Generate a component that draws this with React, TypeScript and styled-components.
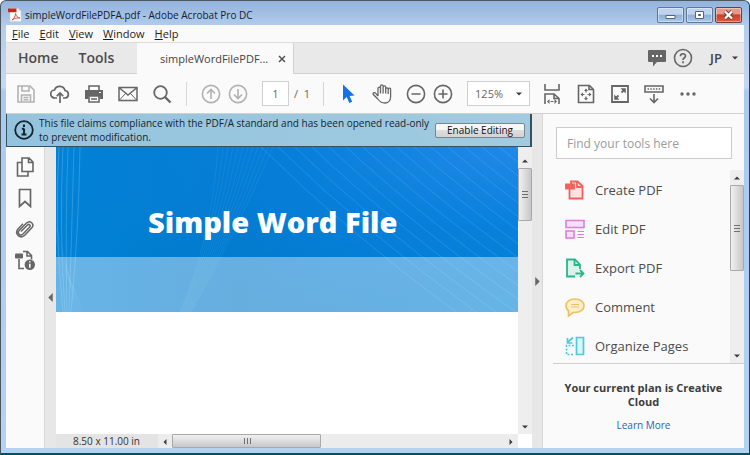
import React from "react";
import styled, { createGlobalStyle, css } from "styled-components";

const GlobalStyle = createGlobalStyle`
  *, *::before, *::after { box-sizing: border-box; }
  body { margin: 0; font-family: "Open Sans", "Noto Sans", sans-serif; color: #444; }
  button, input, select { font: inherit; color: inherit; margin: 0; }
  button { padding: 0; border: 0; background: none; }
`;

/* ---------- window frame ---------- */

const Frame = styled.div`
  display: flex;
  flex-direction: column;
  height: 100vh;
  padding: 0 5px 5px;
  border: solid;
  border-color: #4d5a66 #04505c #04505c #4a5560;
  border-width: 1px 1px 2px;
  border-radius: 6px 6px 0 0;
  background: linear-gradient(#93b3dc 0, #b3cdec 26px, #c3d9f3 86px, #a9c9ef 90px, #b3d3f3 100%);
  overflow: hidden;
`;

const TitleBar = styled.header`
  display: flex;
  align-items: center;
  gap: 3px;
  flex: none;
  height: 24px;
  padding: 4px 2px 0 2px;
`;

const WindowTitle = styled.h1`
  flex: 1;
  margin: 0;
  font-size: 10px;
  line-height: 16px;
  font-weight: 400;
  color: #14202e;
  white-space: nowrap;
`;

const WindowButton = styled.button<{ $danger?: boolean }>`
  display: grid;
  place-items: center;
  width: 27px;
  height: 16px;
  border: 1px solid #5f7896;
  border-radius: 2px;
  background: linear-gradient(#bdd3ee 0 45%, #8dafd6 50%, #a9c8ea);
  box-shadow: inset 0 0 0 1px rgba(255, 255, 255, 0.4);
  ${(p) =>
    p.$danger &&
    css`
      border-color: #7c3a35;
      background: linear-gradient(#e59a8c 0 40%, #c9402c 50%, #dd5a40);
    `}
`;

const WindowButtons = styled.div`
  display: flex;
  gap: 2px;
`;

const Client = styled.div`
  display: flex;
  flex-direction: column;
  flex: 1;
  min-height: 0;
  background: #fafafa;
`;

/* ---------- menu and tabs ---------- */

const MenuBar = styled.nav`
  display: flex;
  align-items: center;
  gap: 10px;
  flex: none;
  height: 18px;
  padding-left: 6px;
  border-bottom: 1px solid #dcdcdc;
`;

const MenuItem = styled.button`
  font-size: 11px;
  line-height: 16px;
  color: #1e1e1e;
`;

const TabBar = styled.div`
  display: flex;
  flex: none;
  height: 31px;
  background: #e9e9e9;
`;

const HomeTabs = styled.div`
  display: flex;
  align-items: center;
  gap: 20px;
  width: 131px;
  padding-left: 12px;
  border-bottom: 1px solid #d2d2d2;
`;

const HomeTab = styled.button`
  font-size: 14px;
  line-height: 20px;
  font-weight: 600;
  color: #4b4b4b;
`;

const DocumentTab = styled.div`
  display: flex;
  align-items: center;
  gap: 10px;
  padding: 0 7px 0 23px;
  font-size: 11px;
  line-height: 20px;
  background: #fafafa;
`;

const CloseTab = styled.button`
  display: grid;
  place-items: center;
  width: 8px;
  height: 12px;
`;

const AccountArea = styled.div`
  display: flex;
  align-items: center;
  justify-content: flex-end;
  gap: 4px;
  flex: 1;
  padding-right: 6px;
  border-bottom: 1px solid #d2d2d2;
  border-left: 1px solid #d2d2d2;
`;

const AccountButton = styled.button`
  display: flex;
  align-items: center;
  gap: 10px;
  margin-left: 12px;
  font-size: 13px;
  line-height: 20px;
  font-weight: 600;
`;

/* ---------- toolbar ---------- */

const Toolbar = styled.div`
  display: flex;
  align-items: center;
  flex: none;
  height: 40px;
  padding: 0 9px;
  border-bottom: 1px solid #d0d0d0;
`;

const ToolGroup = styled.div<{ $gap: number }>`
  display: flex;
  align-items: center;
  gap: ${(p) => p.$gap}px;
`;

const Divider = styled.span`
  width: 1px;
  height: 24px;
  margin: 0 13px;
  background: #d6d6d6;
`;

const IconButton = styled.button<{ $faded?: boolean }>`
  display: grid;
  place-items: center;
  width: 22px;
  height: 22px;
  color: ${(p) => (p.$faded ? "#b2b2b2" : "#666")};
`;

const PageField = styled.label`
  display: flex;
  align-items: center;
  gap: 5px;
  margin-left: 13px;
  font-size: 11px;
  line-height: 20px;
  color: #666;
  white-space: nowrap;
`;

const PageInput = styled.input`
  width: 27px;
  height: 25px;
  padding: 0;
  border: 1px solid #d0d0d0;
  background: #fff;
  text-align: center;
`;

const ZoomField = styled.label`
  position: relative;
  display: flex;
  align-items: center;
  margin: 0 11px 0 13px;
`;

const ZoomSelect = styled.select`
  appearance: none;
  width: 63px;
  height: 25px;
  padding: 0 0 0 7px;
  border: 1px solid #d0d0d0;
  border-radius: 0;
  background: #fff;
  font-size: 11px;
  color: #666;
`;

const ZoomCaret = styled.span`
  position: absolute;
  right: 8px;
  display: flex;
  pointer-events: none;
`;

/* ---------- body ---------- */

const Body = styled.div`
  display: flex;
  flex: 1;
  min-height: 0;
`;

const Workspace = styled.main`
  display: flex;
  flex-direction: column;
  flex: 1;
  min-width: 0;
`;

const Notice = styled.div`
  display: flex;
  align-items: center;
  gap: 5px;
  flex: none;
  height: 33px;
  padding: 0 5px 0 7px;
  border: solid #34525f;
  border-width: 0 2px 1px 1px;
  background: linear-gradient(90deg, #94c3de, #a0cbe0);
  color: #16242e;
`;

const NoticeText = styled.p`
  flex: 1;
  min-width: 0;
  margin: 0;
  font-size: 10px;
  line-height: 14px;
  white-space: nowrap;
`;

const NoticeButton = styled.button`
  flex: none;
  width: 90px;
  height: 15px;
  border: 1px solid #7b8790;
  border-radius: 2px;
  background: linear-gradient(#f6f6f6 0 45%, #dedede 50%, #d2d2d2);
  font-size: 10px;
  line-height: 13px;
  color: #111;
`;

const Viewer = styled.div`
  display: flex;
  flex: 1;
  min-height: 0;
`;

const Rail = styled.nav`
  display: flex;
  flex-direction: column;
  align-items: center;
  gap: 9px;
  width: 39px;
  padding-top: 9px;
  border-right: 1px solid #d9d9d9;
`;

const Gutter = styled.button<{ $wide?: boolean }>`
  display: flex;
  align-items: center;
  justify-content: center;
  flex: none;
  width: 11px;
  background: #e7e7e7;
  border-right: ${(p) => (p.$wide ? "1px solid #d6d6d6" : "0")};
`;

const PageColumn = styled.div`
  display: flex;
  flex-direction: column;
  flex: 1;
  min-width: 0;
`;

const PageRow = styled.div`
  display: flex;
  flex: 1;
  min-height: 0;
`;

const Page = styled.article`
  flex: 1;
  min-width: 0;
  background: #fff;
`;

const Banner = styled.div`
  position: relative;
  overflow: hidden;
  background:
    radial-gradient(ellipse at 100% 0, #2088e9 0, rgba(10, 128, 224, 0.7) 35%, rgba(0, 124, 208, 0) 75%),
    linear-gradient(90deg, #0282d6 0%, #0079c9 40%, #0082d4 100%);
`;

const BannerLines = styled.svg`
  position: absolute;
  inset: 0;
  width: 100%;
  height: 100%;
`;

const BannerTitle = styled.h2`
  position: relative;
  display: flex;
  align-items: center;
  height: 110px;
  margin: 0;
  padding: 40px 0 0 92px;
  font-size: 29px;
  line-height: 40px;
  font-weight: 800;
  color: #fff;
  white-space: nowrap;
`;

const BannerBand = styled.div`
  position: relative;
  height: 55px;
  background: rgba(255, 255, 255, 0.4);
`;

const StatusRow = styled.div`
  display: flex;
  flex: none;
  height: 14px;
  background: #ececec;
`;

const PageSize = styled.span`
  width: 102px;
  padding-left: 17px;
  font-size: 10px;
  line-height: 14px;
  color: #333;
  white-space: nowrap;
  background: #e4e4e4;
`;

/* ---------- scroll bars ---------- */

const VerticalBar = styled.div<{ $inset?: boolean }>`
  display: flex;
  flex-direction: column;
  flex: none;
  width: 14px;
  padding-top: ${(p) => (p.$inset ? 6 : 0)}px;
  background: #eee;
`;

const HorizontalBar = styled.div`
  display: flex;
  flex: 1;
  background: #ececec;
`;

const Corner = styled.span`
  width: 14px;
  background: #fff;
`;

const ArrowButton = styled.button`
  display: grid;
  place-items: center;
  flex: none;
  width: 14px;
  height: 15px;
`;

const Track = styled.div<{ $horizontal?: boolean }>`
  display: flex;
  flex-direction: ${(p) => (p.$horizontal ? "row" : "column")};
  flex: 1;
`;

const Thumb = styled.div<{ $horizontal?: boolean; $share: number }>`
  display: grid;
  place-items: center;
  flex: 0 0 ${(p) => p.$share}%;
  border: 1px solid #a9a9a9;
  border-radius: 1px;
  background: linear-gradient(${(p) => (p.$horizontal ? "180deg" : "90deg")}, #f0f0f0, #dcdcdc 50%, #c6c6ca);
`;

/* ---------- tools pane ---------- */

const ToolsPane = styled.aside`
  display: flex;
  flex-direction: column;
  flex: none;
  width: 201px;
  padding-top: 13px;
`;

const SearchInput = styled.input`
  flex: none;
  height: 32px;
  margin: 0 12px 11px 13px;
  padding: 0 10px;
  border: 1px solid #ccc;
  border-radius: 0;
  background: #fff;
  font-size: 12px;
  &::placeholder { color: #9b9b9b; opacity: 1; }
`;

const ToolScroller = styled.div`
  display: flex;
  flex: 1;
  min-height: 0;
  margin-left: 10px;
  border-bottom: 1px solid #cfcfcf;
`;

const ToolList = styled.ul`
  flex: 1;
  min-width: 0;
  margin: 0;
  padding: 0;
  list-style: none;
  overflow: hidden;
`;

const ToolButton = styled.button`
  display: flex;
  align-items: center;
  gap: 10px;
  width: 100%;
  height: 39px;
  padding-left: 12px;
  font-size: 13px;
  line-height: 20px;
  color: #4c4c4c;
  white-space: nowrap;
`;

const PlanInfo = styled.div`
  flex: none;
  height: 84px;
  padding: 17px 20px 0;
  text-align: center;
  font-size: 10px;
  line-height: 14px;
`;

const PlanText = styled.p`
  margin: 0 0 9px;
  font-size: 11px;
  font-weight: 700;
  color: #3c3c3c;
`;

const PlanLink = styled.a`
  color: #1e66b8;
  text-decoration: none;
`;

/* ---------- icons ---------- */

type IconProps = { size?: number; width?: number; children: React.ReactNode };

const Icon = ({ size = 20, width = 1.6, children }: IconProps) => (
  <svg width={size} height={size} viewBox="0 0 20 20" fill="none" stroke="currentColor" strokeWidth={width} aria-hidden="true">
    {children}
  </svg>
);

const Arrow = ({ dir, large }: { dir: "up" | "down" | "left" | "right"; large?: boolean }) => {
  const paths = { up: "M0 6 4 2l4 4z", down: "M0 2h8L4 6z", left: "M6 0v8L2 4z", right: "M2 0v8l4-4z" };
  const s = large ? 9 : 6;
  return (
    <svg width={s} height={s} viewBox="0 0 8 8" fill={large ? "#666" : "#3c3c3c"} aria-hidden="true">
      <path d={paths[dir]} />
    </svg>
  );
};

const Grip = ({ horizontal }: { horizontal?: boolean }) => (
  <svg width="8" height="8" viewBox="0 0 8 8" stroke="#707070" aria-hidden="true">
    <path d={horizontal ? "M1.5 1v6M4.5 1v6M7.5 1v6" : "M1 1.5h6M1 4.5h6M1 7.5h6"} />
  </svg>
);

const AcrobatIcon = () => (
  <svg width="14" height="14" viewBox="0 0 14 14" aria-hidden="true">
    <path d="M2 .5h8l3 3v10H2z" fill="#fff" stroke="#d5cfd0" strokeWidth=".6" />
    <path d="M0 .5h8.500v3.700H0z" fill="#d3201f" />
    <path d="M4 12c2-1.500 3.500-4 3.600-6.500.8 3 2 4.300 4.400 4.500-3-.4-5.500.2-8 2z" fill="none" stroke="#d8403b" strokeWidth=".9" />
  </svg>
);

const SaveIcon = () => (
  <Icon>
    <path d="M2 2h12l4 4v12H2zM6 2v5h7V2M5.500 18v-7h9v7M7.500 13.500h5M7.500 15.800h5" />
  </Icon>
);
const CloudIcon = () => (
  <Icon width={1.7}>
    <path d="M7 14H5a4 4 0 0 1-.5-8A5.500 5.500 0 0 1 15 6.500 3.800 3.800 0 0 1 15.300 14H13M10 19V9M6.800 12.200 10 9l3.200 3.200" />
  </Icon>
);
const PrintIcon = () => (
  <Icon>
    <path d="M5 6V2h10v4" />
    <path d="M1 6h18v9h-3.500v-3h-11v3H1z" fill="currentColor" stroke="none" />
    <path d="M5 12h10v6H5zM7 15h6" />
    <path d="M15 8.500h2" stroke="#fafafa" strokeWidth="1.200" />
  </Icon>
);
const MailIcon = () => (
  <Icon width={1.5}>
    <path d="M1 3.500h18v13H1zM1.500 4 10 11l8.500-7" />
    <path d="m1.500 16 6-6.500M18.500 16l-6-6.500" strokeWidth="1" />
  </Icon>
);
const SearchIcon = () => (
  <Icon width={1.8}>
    <circle cx="8.500" cy="8.500" r="6.300" />
    <path d="m13 13 5.500 5.500" strokeWidth="2.400" />
  </Icon>
);
const CircleIcon = ({ d }: { d: string }) => (
  <Icon>
    <circle cx="10" cy="10" r="8.600" />
    <path d={d} />
  </Icon>
);
const CursorIcon = () => (
  <svg width="20" height="20" viewBox="0 0 20 20" fill="#1473e6" aria-hidden="true">
    <path d="M5 .5v16l3.700-3.400 2.600 5.900 2.900-1.300-2.600-5.800 4.900-.4z" />
  </svg>
);
const HandIcon = () => (
  <Icon width={1.3}>
    <path d="M6 12V4.300a1.200 1.200 0 0 1 2.500 0V2.200a1.300 1.300 0 0 1 2.600 0v.9a1.300 1.300 0 0 1 2.600 0v2a1.200 1.200 0 0 1 2.500 0 1.200 1.200 0 0 1 2.400.5V13c0 3.500-2.500 6-5.800 6-3.500 0-5.300-1.500-7-4L1.300 10.500c-.8-1.500 1-2.500 2.200-1.400L6 12M8.500 4v5.500M11.100 3v6.500M13.700 3.500v6M16.200 5v5" />
  </Icon>
);
const FitWidthIcon = () => (
  <Icon>
    <path d="M3 0v6h14V0M3 20V10h9l5 4.500V20M12 10v4.500h5" />
    <path d="M5 17.500 7.500 15v5zM15 17.500 12.500 15v5z" fill="currentColor" stroke="none" />
    <path d="M8.500 17.500h3" strokeWidth="1.200" />
  </Icon>
);
const FitPageIcon = () => (
  <Icon>
    <path d="M2.500 1.500h11l4 4v13h-15zM13 1.500v4h4" />
    <path d="M10 4.500 12 7H8zM10 16.500 12 14H8zM4.500 10.500 7 8.500v4zM15.500 10.500 13 8.500v4z" fill="currentColor" stroke="none" />
    <path d="M10 7v1.500M10 12.500V14M7 10.500h1.500M11.500 10.500H13" strokeWidth="1.200" />
  </Icon>
);
const FullscreenIcon = () => (
  <Icon width={1.8}>
    <path d="M2 2h16v16H2zM11.500 8.500 14 6M6 14l2.500-2.500" />
    <path d="M15.800 4.200v5.300l-5.300-5.300zM4.200 15.800v-5.300l5.300 5.300z" fill="currentColor" stroke="none" />
  </Icon>
);
const ReadModeIcon = () => (
  <Icon>
    <path d="M1 2h18v6H1zM10 10v8.500M6 14.500l4 4 4-4" />
    <path d="M3.500 5h13" strokeDasharray="1.500 1.300" />
  </Icon>
);
const MoreIcon = () => (
  <Icon>
    <g fill="currentColor" stroke="none">
      <circle cx="4" cy="10" r="1.700" />
      <circle cx="10" cy="10" r="1.700" />
      <circle cx="16" cy="10" r="1.700" />
    </g>
  </Icon>
);
const PagesIcon = () => (
  <Icon>
    <path d="M7 1h7l4 4v9.500H7zM13.500 1v4.500H18M7 5.500H2.500V19H13v-4" />
  </Icon>
);
const BookmarkIcon = () => (
  <Icon width={1.7}>
    <path d="M4.500 1.500h11v17L10 13.500l-5.500 5z" />
  </Icon>
);
const ClipIcon = () => (
  <Icon width={1.5}>
    <path d="m6 12.500 6.500-6.500c1.500-1.500 3.700.5 2.200 2.100L8 15c-2.600 2.500-6.200-.7-3.800-3.500L11.500 4C15 .7 20 5 16.800 8.800L10 16c-4.500 4.500-11-1-7-6L8 4.800" />
  </Icon>
);
const DocInfoIcon = () => (
  <Icon>
    <path d="M8 1.500h4.500l4 4v4M12 1.500V6h4.500M4 9v9.500h5" />
    <rect x="0" y="3.500" width="8" height="5" rx="1" fill="currentColor" stroke="none" />
    <circle cx="14.800" cy="14.800" r="5.200" fill="currentColor" stroke="none" />
    <path d="M14.800 13.800v4M14.800 11.200v1.400" stroke="#fafafa" />
  </Icon>
);
const CreateIcon = () => (
  <Icon width={1.8}>
    <g stroke="#f0625a">
      <path d="M4.500 9v9.500h13V6l-5-4.500H6V4" fill="#fde3e1" />
      <path d="M12 1.500V7h5.500" />
      <path d="M1 4.500h8v4H1z" fill="#f0625a" />
    </g>
  </Icon>
);
const EditIcon = () => (
  <Icon width={1.6}>
    <g stroke="#e07be0">
      <path d="M1 1.500h18v7H1zM1 12h8v7H1z" fill="#f9dff9" />
      <path d="M12.500 12.500H19M12.500 15.500H19M12.500 18.500H19" strokeWidth="1" />
    </g>
  </Icon>
);
const ExportIcon = () => (
  <Icon width={1.8}>
    <g stroke="#2cb58a">
      <path d="M10 18.500H2v-17h8l5 5V11" fill="#daf3ea" />
      <path d="M9.500 1.500V7H15M10.500 15.500h7.500M15 12l3.500 3.500L15 19" />
    </g>
  </Icon>
);
const CommentIcon = () => (
  <Icon width={1.7}>
    <g stroke="#f3c05a">
      <path d="M10 2c5 0 9 2.800 9 6.700s-4 6.800-9 6.800l-1.500-.1L3.500 19v-5C2 12.700 1 10.900 1 8.700 1 4.800 5 2 10 2z" fill="#fdf0cf" />
      <path d="M6 7.500h8M6 10h8" strokeWidth="1" />
    </g>
  </Icon>
);
const OrganizeIcon = () => (
  <Icon width={1.7}>
    <g stroke="#4dcbdc">
      <path d="M11.500 1.500h7v17h-7z" fill="#d9f5f9" />
      <path d="M9 9.500H1.500v9H9" strokeDasharray="2 1.500" />
      <path d="M8 1.500 3 6M2.500 2v5h5" />
    </g>
  </Icon>
);
const ChatIcon = () => (
  <svg width="18" height="18" viewBox="0 0 18 18" aria-hidden="true">
    <path d="M1 1h16a1 1 0 0 1 1 1v10a1 1 0 0 1-1 1H9l-4 4.500V13H1a1 1 0 0 1-1-1V2a1 1 0 0 1 1-1z" fill="#666" />
    <path d="M4 6h2v2H4zM8 6h2v2H8zM12 6h2v2h-2z" fill="#fff" />
  </svg>
);
const HelpIcon = () => (
  <Icon>
    <circle cx="10" cy="10" r="8.500" />
    <path d="M7.500 8.200c0-3.300 5-3.100 5-.3 0 1.800-2.500 1.900-2.500 4M10 13.300v1.900" strokeWidth="1.700" />
  </Icon>
);
const InfoIcon = () => (
  <Icon width={1.8}>
    <circle cx="10" cy="10" r="8.800" />
    <path d="M10 8.500v6M7.800 8.800H10M7.500 14.500h5M10 4.500V7" strokeWidth="2" />
  </Icon>
);

const BannerArt = () => (
  <BannerLines viewBox="0 0 462 165" preserveAspectRatio="xMidYMin slice" fill="none" stroke="#8ad0ff" aria-hidden="true">
    <g strokeOpacity=".3">
      {[3, 7, 12, 18, 24].map((x, i) => (
        <path key={x} d={`M${x} 0Q${x - 5 + i} 80 ${7 + i * 2} 165`} />
      ))}
    </g>
    <g strokeOpacity=".11">
      {Array.from({ length: 12 }, (_, i) => (
        <path key={i} d={`M${162 + i * 5} 0Q${156 + i * 2} 90 ${124 + i} 165`} />
      ))}
      {Array.from({ length: 5 }, (_, i) => (
        <path key={i} d={`M${-4} ${70 + i * 14}Q14 120 ${18 + i * 2} 165`} />
      ))}
    </g>
    <g strokeOpacity=".2">
      {Array.from({ length: 16 }, (_, i) => (
        <path key={i} d={`M${205 + i * 17} 0Q${290 + i * 17} ${84 - i} ${400 + i * 20} 165`} />
      ))}
    </g>
  </BannerLines>
);

/* ---------- data ---------- */

const menus = ["File", "Edit", "View", "Window", "Help"];

const fileTools = [
  { label: "Save", icon: <SaveIcon />, faded: true },
  { label: "Upload", icon: <CloudIcon /> },
  { label: "Print", icon: <PrintIcon /> },
  { label: "Email", icon: <MailIcon /> },
  { label: "Search", icon: <SearchIcon /> },
];

const viewTools = [
  { label: "Fit width", icon: <FitWidthIcon /> },
  { label: "Fit page", icon: <FitPageIcon /> },
  { label: "Full screen", icon: <FullscreenIcon /> },
  { label: "Read mode", icon: <ReadModeIcon /> },
  { label: "More", icon: <MoreIcon /> },
];

const railTools = [
  { label: "Page thumbnails", icon: <PagesIcon /> },
  { label: "Bookmarks", icon: <BookmarkIcon /> },
  { label: "Attachments", icon: <ClipIcon /> },
  { label: "Standards", icon: <DocInfoIcon /> },
];

const tools = [
  { label: "Create PDF", icon: <CreateIcon /> },
  { label: "Edit PDF", icon: <EditIcon /> },
  { label: "Export PDF", icon: <ExportIcon /> },
  { label: "Comment", icon: <CommentIcon /> },
  { label: "Organize Pages", icon: <OrganizeIcon /> },
];

const VerticalScroll = ({ share, inset }: { share: number; inset?: boolean }) => (
  <VerticalBar $inset={inset}>
    <ArrowButton aria-label="Scroll up"><Arrow dir="up" /></ArrowButton>
    <Track>
      <Thumb $share={share}><Grip /></Thumb>
    </Track>
    <ArrowButton aria-label="Scroll down"><Arrow dir="down" /></ArrowButton>
  </VerticalBar>
);

export default function App() {
  return (
    <>
      <GlobalStyle />
      <Frame>
        <TitleBar>
          <AcrobatIcon />
          <WindowTitle>simpleWordFilePDFA.pdf - Adobe Acrobat Pro DC</WindowTitle>
          <WindowButtons>
            <WindowButton aria-label="Minimize">
              <svg width="11" height="10" viewBox="0 0 11 10"><path d="M1 5.500h9v3H1z" fill="#fff" stroke="#55657a" /></svg>
            </WindowButton>
            <WindowButton aria-label="Maximize">
              <svg width="11" height="10" viewBox="0 0 11 10"><path d="M1.500 1.500h8v7h-8z" fill="#fff" stroke="#55657a" /><path d="M4.500 4.500h2v1h-2z" stroke="#55657a" /></svg>
            </WindowButton>
            <WindowButton aria-label="Close" $danger>
              <svg width="11" height="10" viewBox="0 0 11 10" fill="none"><path d="m2 1.500 7 7M9 1.500l-7 7" stroke="#6b3a3a" strokeWidth="4" /><path d="m2 1.500 7 7M9 1.500l-7 7" stroke="#fff" strokeWidth="2.300" /></svg>
            </WindowButton>
          </WindowButtons>
        </TitleBar>
        <Client>
          <MenuBar>
            {menus.map((m) => (
              <MenuItem key={m}><u>{m[0]}</u>{m.slice(1)}</MenuItem>
            ))}
          </MenuBar>
          <TabBar>
            <HomeTabs>
              <HomeTab>Home</HomeTab>
              <HomeTab>Tools</HomeTab>
            </HomeTabs>
            <DocumentTab>
              simpleWordFilePDF...
              <CloseTab aria-label="Close tab">
                <svg width="8" height="8" viewBox="0 0 8 8"><path d="m1 1 6 6M7 1 1 7" stroke="#555" strokeWidth="1.500" /></svg>
              </CloseTab>
            </DocumentTab>
            <AccountArea>
              <IconButton aria-label="Notifications"><ChatIcon /></IconButton>
              <IconButton aria-label="Help"><HelpIcon /></IconButton>
              <AccountButton>JP <Arrow dir="down" /></AccountButton>
            </AccountArea>
          </TabBar>
          <Toolbar>
            <ToolGroup $gap={12}>
              {fileTools.map((t) => (
                <IconButton key={t.label} aria-label={t.label} $faded={t.faded}>{t.icon}</IconButton>
              ))}
            </ToolGroup>
            <Divider />
            <ToolGroup $gap={5}>
              <IconButton aria-label="Previous page" $faded><CircleIcon d="M10 15V5.500M6 9.500l4-4 4 4" /></IconButton>
              <IconButton aria-label="Next page" $faded><CircleIcon d="M10 5v9.500M6 10.500l4 4 4-4" /></IconButton>
            </ToolGroup>
            <PageField>
              <PageInput aria-label="Page number" defaultValue="1" />
              / &nbsp;1
            </PageField>
            <Divider />
            <ToolGroup $gap={12}>
              <IconButton aria-label="Select"><CursorIcon /></IconButton>
              <IconButton aria-label="Pan"><HandIcon /></IconButton>
              <ToolGroup $gap={5}>
                <IconButton aria-label="Zoom out"><CircleIcon d="M5.500 10h9" /></IconButton>
                <IconButton aria-label="Zoom in"><CircleIcon d="M5.500 10h9M10 5.500v9" /></IconButton>
              </ToolGroup>
            </ToolGroup>
            <ZoomField>
              <ZoomSelect aria-label="Zoom level" defaultValue="125%">
                <option>100%</option>
                <option>125%</option>
                <option>150%</option>
              </ZoomSelect>
              <ZoomCaret><Arrow dir="down" /></ZoomCaret>
            </ZoomField>
            <ToolGroup $gap={12}>
              {viewTools.map((t) => (
                <IconButton key={t.label} aria-label={t.label}>{t.icon}</IconButton>
              ))}
            </ToolGroup>
          </Toolbar>
          <Body>
            <Workspace>
              <Notice role="status">
                <InfoIcon />
                <NoticeText>
                  This file claims compliance with the PDF/A standard and has been opened read-only
                  <br />
                  to prevent modification.
                </NoticeText>
                <NoticeButton>Enable Editing</NoticeButton>
              </Notice>
              <Viewer>
                <Rail>
                  {railTools.map((t) => (
                    <IconButton key={t.label} aria-label={t.label}>{t.icon}</IconButton>
                  ))}
                </Rail>
                <Gutter aria-label="Expand navigation pane"><Arrow dir="left" large /></Gutter>
                <PageColumn>
                  <PageRow>
                    <Page>
                      <Banner>
                        <BannerArt />
                        <BannerTitle>Simple Word File</BannerTitle>
                        <BannerBand />
                      </Banner>
                    </Page>
                    <VerticalScroll share={21} inset />
                  </PageRow>
                  <StatusRow>
                    <PageSize>8.50 x 11.00 in</PageSize>
                    <HorizontalBar>
                      <ArrowButton aria-label="Scroll left"><Arrow dir="left" /></ArrowButton>
                      <Track $horizontal>
                        <Thumb $horizontal $share={45}><Grip horizontal /></Thumb>
                      </Track>
                      <ArrowButton aria-label="Scroll right"><Arrow dir="right" /></ArrowButton>
                    </HorizontalBar>
                    <Corner />
                  </StatusRow>
                </PageColumn>
              </Viewer>
            </Workspace>
            <Gutter $wide aria-label="Collapse tools pane"><Arrow dir="right" large /></Gutter>
            <ToolsPane>
              <SearchInput aria-label="Find your tools here" placeholder="Find your tools here" />
              <ToolScroller>
                <ToolList>
                  {tools.map((t) => (
                    <li key={t.label}><ToolButton>{t.icon}{t.label}</ToolButton></li>
                  ))}
                </ToolList>
                <VerticalScroll share={53} />
              </ToolScroller>
              <PlanInfo>
                <PlanText>Your current plan is Creative Cloud</PlanText>
                <PlanLink href="#plan">Learn More</PlanLink>
              </PlanInfo>
            </ToolsPane>
          </Body>
        </Client>
      </Frame>
    </>
  );
}
